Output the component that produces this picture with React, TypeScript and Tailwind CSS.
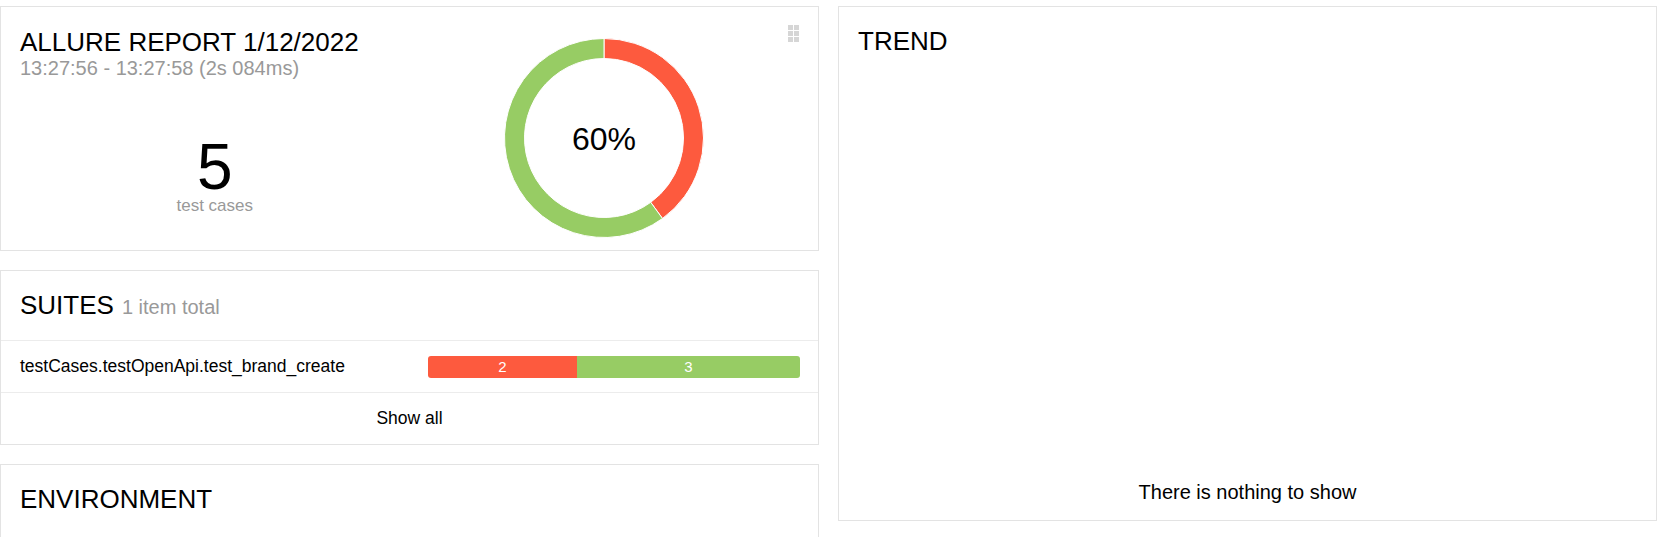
import React from "react";

const RED = "#fd5a3e";
const GREEN = "#97cc64";

// donut: 2 failed / 3 passed, red first, clockwise from 12 o'clock
const Donut = () => (
  <svg width="200" height="200" viewBox="0 0 200 200">
    <path
      d="M100,0.5 A99.5,99.5 0 0 1 158.49,180.5 L146.73,164.32 A79.5,79.5 0 0 0 100,20.5 Z"
      fill={RED}
      stroke="#fff"
      strokeWidth="1"
    />
    <path
      d="M158.49,180.5 A99.5,99.5 0 1 1 100,0.5 L100,20.5 A79.5,79.5 0 1 0 146.73,164.32 Z"
      fill={GREEN}
      stroke="#fff"
      strokeWidth="1"
    />
    <text
      x="100"
      y="111.5"
      textAnchor="middle"
      fontSize="32"
      fontFamily="'Liberation Sans', Arial, sans-serif"
      fill="#000"
    >
      60%
    </text>
  </svg>
);

const DragHandle = () => (
  <div className="absolute right-[19px] top-[18px] grid grid-cols-2 gap-[1px]">
    {[0, 1, 2, 3, 4, 5].map((i) => (
      <span key={i} className="block w-[5px] h-[5px] bg-[#d6d6d6]" />
    ))}
  </div>
);

const Summary = () => (
  <div className="relative h-[245px] border border-[#e3e3e3] bg-white flex">
    <div className="w-1/2 pl-[19px] pt-[20px]">
      <div className="text-[26px] leading-[30px] text-black">ALLURE REPORT 1/12/2022</div>
      <div className="text-[20px] leading-[23px] text-[#999]">13:27:56 - 13:27:58 (2s 084ms)</div>
      <div className="mt-[55px] flex flex-col items-center">
        <div className="text-[64px] leading-none text-black">5</div>
        <div className="text-[17px] leading-[19px] -mt-[3px] text-[#999]">test cases</div>
      </div>
    </div>
    <div className="w-1/2 flex justify-center pt-[31px] pr-[19px]">
      <Donut />
    </div>
    <DragHandle />
  </div>
);

const Suites = () => (
  <div className="border border-[#e3e3e3] bg-white">
    <div className="h-[70px] px-[19px] pt-[19px] border-b border-[#ececec] flex items-baseline gap-[8px]">
      <span className="text-[26px] leading-[30px] text-black">SUITES</span>
      <span className="text-[20px] leading-[24px] text-[#999]">1 item total</span>
    </div>
    <div className="h-[52px] pl-[19px] pr-[18px] flex items-center border-b border-[#ececec]">
      <div className="flex-1 text-[17.5px] text-black">testCases.testOpenApi.test_brand_create</div>
      <div className="w-[372px] h-[22px] flex rounded-[3px] overflow-hidden text-white text-[15px] leading-[22px]">
        <div className="w-[40%] text-center" style={{ backgroundColor: RED }}>2</div>
        <div className="flex-1 text-center" style={{ backgroundColor: GREEN }}>3</div>
      </div>
    </div>
    <div className="h-[51px] flex items-center justify-center text-[17.5px] text-black">Show all</div>
  </div>
);

const Environment = () => (
  <div className="h-[140px] border border-[#e3e3e3] bg-white px-[19px] pt-[19px]">
    <div className="text-[26px] leading-[30px] text-black">ENVIRONMENT</div>
  </div>
);

const Trend = () => (
  <div className="h-[515px] border border-[#e3e3e3] bg-white flex flex-col px-[19px] pt-[19px] pb-[16px]">
    <div className="text-[26px] leading-[30px] text-black">TREND</div>
    <div className="flex-1" />
    <div className="text-center text-[20px] leading-[23px] text-black">There is nothing to show</div>
  </div>
);

export default function App() {
  return (
    <div className="h-[537px] overflow-hidden bg-white font-['Liberation_Sans',Arial,sans-serif]">
      <div className="flex gap-[19px] pt-[6px]">
        <div className="w-[819px] flex flex-col gap-[19px]">
          <Summary />
          <Suites />
          <Environment />
        </div>
        <div className="w-[819px]">
          <Trend />
        </div>
      </div>
    </div>
  );
}
